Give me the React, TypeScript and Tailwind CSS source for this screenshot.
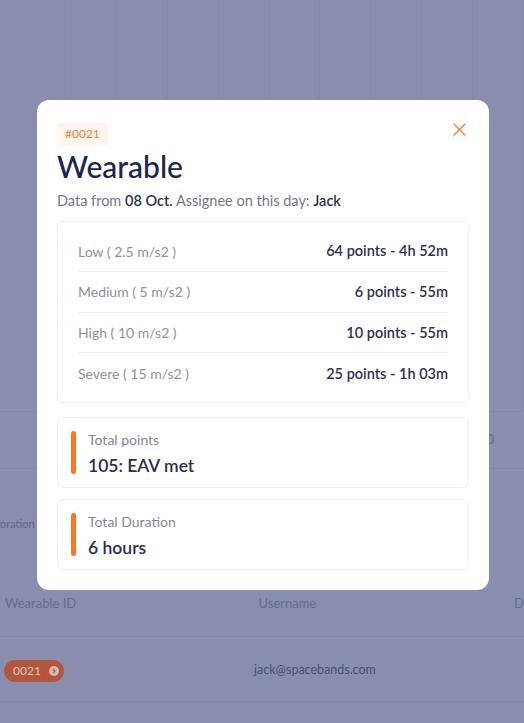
import React from "react";

const font = { fontFamily: "Lato, 'Open Sans', sans-serif" };

function Row({ label, value, last }: { label: string; value: string; last?: boolean }) {
  return (
    <div className={`flex h-[40.6px] items-center justify-between ${last ? "" : "border-b border-[#eef0f4]"}`}>
      <span className="text-[14px] text-[#8e90a2]">{label}</span>
      <span className="text-[14.5px] font-semibold text-[#2f3250]">{value}</span>
    </div>
  );
}

function Stat({ label, value }: { label: string; value: string }) {
  return (
    <div className="flex h-[71px] items-center gap-3 rounded-[6px] border border-[#eff0f4] px-[13px]">
      <div className="h-[43px] w-[5px] rounded-full bg-[#f77a22]" />
      <div className="flex flex-col pt-[3px]">
        <span className="text-[14px] leading-[18px] text-[#85879b]">{label}</span>
        <span className="mt-[6px] text-[17.5px] font-semibold leading-[22px] text-[#2a2e50]">{value}</span>
      </div>
    </div>
  );
}

export default function App() {
  const cols = [0, 1, 2, 3, 4, 5, 6, 7, 8, 9];
  return (
    <div className="relative h-[723px] w-[524px] overflow-hidden bg-[#8a8eae]" style={font}>
      {/* underlying page */}
      <div className="flex h-[411px] pl-[15px]">
        {cols.map((c) => (
          <div key={c} className="h-full w-[52px] border-r border-[#8589a9]" />
        ))}
      </div>
      <div className="flex h-[57px] items-center justify-end border-t border-[#8488a8] pr-[30px]">
        <span className="text-[13px] text-[#62668a]">0</span>
      </div>
      <div className="flex h-[112px] items-center border-t border-[#8488a8]">
        <span className="text-[11px] text-[#62668a]">oration</span>
      </div>
      <div className="flex h-[47px] items-center">
        <span className="ml-[5px] w-[254px] text-[13px] text-[#686c90]">Wearable ID</span>
        <span className="w-[256px] text-[13px] text-[#686c90]">Username</span>
        <span className="text-[13px] text-[#686c90]">D</span>
      </div>
      <div className="mt-[9px] flex h-[66px] items-center border-y border-[#8488a8] pt-[3px]">
        <div className="ml-[4px] flex h-[22px] w-[60px] items-center justify-between rounded-full bg-[#b2573f] pl-[9px] pr-[5px]">
          <span className="text-[12px] text-[#e3c3ba]">0021</span>
          <span className="flex h-[10px] w-[10px] items-center justify-center rounded-full bg-[#d9b7ae]">
            <svg width="6" height="6" viewBox="0 0 6 6"><path d="M2 1 L4 3 L2 5" stroke="#b2573f" strokeWidth="1.2" fill="none" /></svg>
          </span>
        </div>
        <span className="ml-[190px] text-[12.5px] text-[#4b4f77]">jack@spacebands.com</span>
      </div>

      {/* modal */}
      <div className="absolute left-[37px] top-[100px] h-[490px] w-[452px] overflow-hidden rounded-[12px] bg-white px-5 pt-5">
        <button className="absolute right-[23px] top-[23px]">
          <svg width="13" height="13" viewBox="0 0 13 13">
            <path d="M1 1 L12 12 M12 1 L1 12" stroke="#f0894a" strokeWidth="1.5" strokeLinecap="round" />
          </svg>
        </button>
        <div className="inline-flex h-[23px] items-center rounded-[4px] bg-[#fff4ee] px-[8px] text-[12px] text-[#f07f3c]">#0021</div>
        <h1 className="mt-[2px] text-[30px] font-medium leading-[36px] text-[#1e2450]">Wearable</h1>
        <p className="mt-[7px] text-[14.5px] leading-[20px] text-[#74778c]">
          Data from <span className="font-semibold text-[#2f3250]">08 Oct.</span> Assignee on this day:{" "}
          <span className="font-semibold text-[#2f3250]">Jack</span>
        </p>
        <div className="mt-[10px] rounded-[6px] border border-[#eff0f4] px-5 pb-[8px] pt-[10px]">
          <Row label="Low ( 2.5 m/s2 )" value="64 points - 4h 52m" />
          <Row label="Medium ( 5 m/s2 )" value="6 points - 55m" />
          <Row label="High ( 10 m/s2 )" value="10 points - 55m" />
          <Row label="Severe ( 15 m/s2 )" value="25 points - 1h 03m" last />
        </div>
        <div className="mt-[14px]">
          <Stat label="Total points" value="105: EAV met" />
        </div>
        <div className="mt-[11px]">
          <Stat label="Total Duration" value="6 hours" />
        </div>
      </div>
    </div>
  );
}
